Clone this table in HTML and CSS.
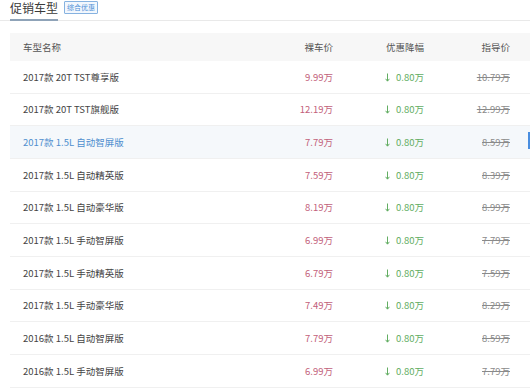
FILE: index.html
```html
<!DOCTYPE html>
<html>

<head>
    <meta charset="utf-8">
    <title>促销车型</title>
    <link rel="stylesheet" href="styles.css">
</head>

<body>
    <div class="promo-head">
        <div class="promo-tab">促销车型</div>
        <span class="promo-badge">综合优惠</span>
    </div>
    <div class="promo-table">
        <div class="promo-row promo-row-head">
            <div class="col-name">车型名称</div>
            <div class="col-price">裸车价</div>
            <div class="col-off">优惠降幅</div>
            <div class="col-guide">指导价</div>
        </div>
    </div>
    <script>
        const cars = [
            ['2017款 20T TST尊享版', '9.99', '10.79'],
            ['2017款 20T TST旗舰版', '12.19', '12.99'],
            ['2017款 1.5L 自动智屏版', '7.79', '8.59'],
            ['2017款 1.5L 自动精英版', '7.59', '8.39'],
            ['2017款 1.5L 自动豪华版', '8.19', '8.99'],
            ['2017款 1.5L 手动智屏版', '6.99', '7.79'],
            ['2017款 1.5L 手动精英版', '6.79', '7.59'],
            ['2017款 1.5L 手动豪华版', '7.49', '8.29'],
            ['2016款 1.5L 自动智屏版', '7.79', '8.59'],
            ['2016款 1.5L 手动智屏版', '6.99', '7.79']
        ];

        const arrow = '<svg class="down" width="5" height="9" viewBox="0 0 5 9">'
            + '<path d="M2.5 0.5V8M0.6 5.8L2.5 8.2L4.4 5.8" fill="none" stroke="currentColor" stroke-width="1"/></svg>';

        const $table = document.querySelector('.promo-table');

        cars.forEach(function(item, i) {
            const $row = document.createElement('div');
            $row.className = 'promo-row';
            if (i === 2) {
                $row.className += ' active';
            }
            $row.innerHTML = '<div class="col-name">' + item[0] + '</div>'
                + '<div class="col-price">' + item[1] + '万</div>'
                + '<div class="col-off">' + arrow + '0.80万</div>'
                + '<div class="col-guide"><s>' + item[2] + '万</s></div>';
            if (i === 2) {
                const $bar = document.createElement('span');
                $bar.className = 'promo-bar';
                $row.appendChild($bar);
            }
            $table.appendChild($row);
        });
    </script>
</body>

</html>
```

FILE: styles.css
```css
html,
body {
    margin: 0;
    padding: 0;
    background: #fff;
    font-family: "Noto Sans CJK SC", "Liberation Sans", sans-serif;
    color: #333;
}

.promo-head {
    height: 20px;
    padding-left: 10px;
    border-bottom: 1px solid #e9e9e9;
    display: flex;
    align-items: flex-start;
}

.promo-tab {
    height: 21px;
    line-height: 16px;
    padding-top: 0;
    font-size: 12px;
    color: #3a3a3a;
    border-bottom: 2px solid #8fa3b8;
    box-sizing: border-box;
}

.promo-badge {
    margin: 1px 0 0 6px;
    height: 11px;
    line-height: 11px;
    padding: 0 2px;
    font-size: 7px;
    color: #4a8ed6;
    background: #f2f7fd;
    border: 1px solid #86b2e0;
    border-radius: 1px;
}

.promo-table {
    margin: 12px 0 0 10px;
}

.promo-row {
    position: relative;
    display: grid;
    grid-template-columns: 1fr 90px 91px 96px;
    align-items: center;
    height: 31.67px;
    border-bottom: 1px solid #f0f0f0;
    font-size: 9.5px;
    color: #444;
}

.promo-row-head {
    height: 28px;
    border-bottom: none;
    background: #f7f7f7;
    color: #555;
}

.promo-row.active {
    background: #f5f8fb;
}

.promo-row.active .col-name {
    color: #4f8fcf;
}

.col-name {
    padding-left: 13px;
}

.col-price {
    text-align: right;
    padding-right: 10px;
    color: #c2607a;
}

.promo-row-head .col-price,
.promo-row-head .col-off,
.promo-row-head .col-guide {
    color: #555;
}

.col-off {
    text-align: right;
    padding-right: 10px;
    color: #62ad62;
}

.col-off .down {
    vertical-align: -1px;
    margin-right: 6px;
}

.col-guide {
    text-align: right;
    padding-right: 20px;
    color: #8a8a8a;
}

.promo-bar {
    position: absolute;
    right: 0;
    top: 6px;
    width: 2px;
    height: 17px;
    background: #4a8ee0;
}
```
